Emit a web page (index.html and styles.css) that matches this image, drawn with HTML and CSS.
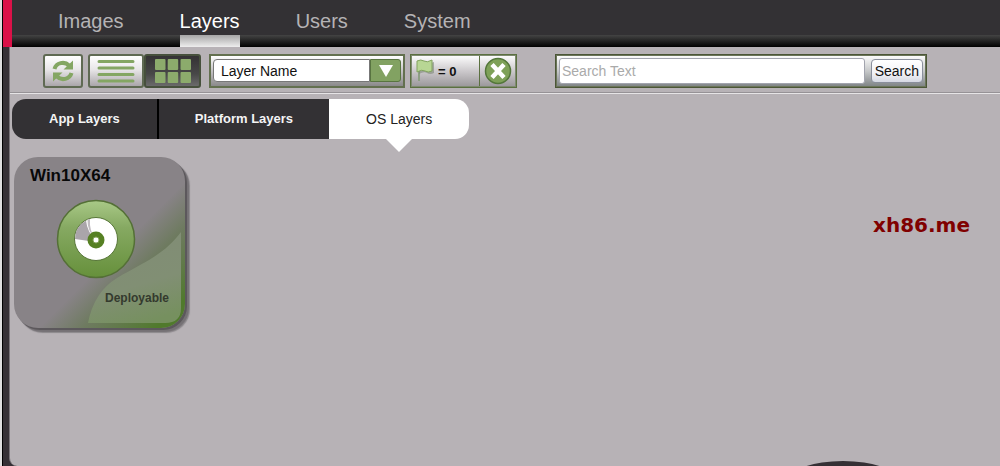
FILE: index.html
```html
<!DOCTYPE html>
<html lang="en">
<head>
    <meta charset="UTF-8">
    <meta name="viewport" content="width=device-width, initial-scale=1.0">
    <title>OS Layers</title>
    <link rel="stylesheet" href="styles.css">
</head>
<body>
    <div class="app">
        <header class="header">
            <nav class="nav">
                <a class="nav-link" href="#images">Images</a>
                <a class="nav-link active" href="#layers">Layers</a>
                <a class="nav-link" href="#users">Users</a>
                <a class="nav-link" href="#system">System</a>
            </nav>
        </header>

        <main class="content">
            <div class="toolbar">
                <button class="tool-button refresh" type="button" aria-label="Refresh">
                    <svg width="24" height="24" viewBox="0 0 24 24" fill="none" stroke="#84a663" stroke-width="4">
                        <path d="M3.500 10 A8.500 8 0 0 1 18 6.500"/>
                        <path d="M20.500 14 A8.500 8 0 0 1 6 17.500"/>
                        <path d="M22 1.500 V10.500 H12.500 Z M2 22.500 V13.500 H11.500 Z" fill="#84a663" stroke="none"/>
                    </svg>
                </button>
                <div class="view-switch">
                    <button class="tool-button view" type="button" aria-label="List view">
                        <svg width="38" height="24" viewBox="0 0 38 24" stroke="#84a663" stroke-width="3" stroke-linecap="round">
                            <path d="M2 2.500H36M2 9H36M2 15.500H36M2 22H36"/>
                        </svg>
                    </button>
                    <button class="tool-button view selected" type="button" aria-label="Grid view">
                        <svg width="36" height="24" viewBox="0 0 36 24" fill="#8cab6c">
                            <rect x="0" y="0" width="10.500" height="11" rx="1"/>
                            <rect x="12.700" y="0" width="10.500" height="11" rx="1"/>
                            <rect x="25.500" y="0" width="10.500" height="11" rx="1"/>
                            <rect x="0" y="13" width="10.500" height="11" rx="1"/>
                            <rect x="12.700" y="13" width="10.500" height="11" rx="1"/>
                            <rect x="25.500" y="13" width="10.500" height="11" rx="1"/>
                        </svg>
                    </button>
                </div>
                <div class="sort">
                    <select class="sort-select" aria-label="Sort by">
                        <option>Layer Name</option>
                    </select>
                    <span class="sort-arrow">
                        <svg width="14" height="12" viewBox="0 0 14 12"><path d="M0 0H14L7 12Z" fill="#fff"/></svg>
                    </span>
                </div>
                <div class="flags">
                    <button class="flag-count" type="button">
                        <svg width="20" height="24" viewBox="0 0 20 24">
                            <path d="M3 3V22" stroke="#8d9f83" stroke-width="2"/>
                            <path d="M3 4Q7 1 10 3T18 3V14Q14 16 11 14T3 15Z" fill="#7d8777" opacity=".6"/>
                            <path d="M1 2Q5 0 8 2T16 1V12Q12 14 9 12T1 13Z" fill="#b8d694" stroke="#82a35f"/>
                        </svg>
                        <span>= 0</span>
                    </button>
                    <button class="flag-clear" type="button" aria-label="Clear flags">
                        <svg width="28" height="28" viewBox="0 0 28 28">
                            <circle cx="14" cy="14" r="12.500" fill="#7ea158" stroke="#53763a" stroke-width="1.500"/>
                            <path d="M8 7.500 20 20.500M20 7.500 8 20.500" stroke="#fff" stroke-width="4.500"/>
                        </svg>
                    </button>
                </div>
                <form class="search">
                    <input class="search-input" type="text" placeholder="Search Text" aria-label="Search Text">
                    <button class="search-button" type="button">Search</button>
                </form>
            </div>

            <nav class="tabs">
                <a class="tab" href="#app-layers">App Layers</a>
                <a class="tab platform" href="#platform-layers">Platform Layers</a>
                <a class="tab current" href="#os-layers">OS Layers</a>
            </nav>

            <div class="layers">
                <article class="layer-card">
                    <svg class="layer-corner" width="171" height="171" viewBox="0 0 171 171">
                        <defs>
                            <linearGradient id="corner" gradientUnits="userSpaceOnUse" x1="98" y1="98" x2="171" y2="171">
                                <stop offset="0" stop-color="#5d7546" stop-opacity="0"/>
                                <stop offset="0.3" stop-color="#5d7546" stop-opacity="0.6"/>
                                <stop offset="0.8" stop-color="#507a2c"/>
                            </linearGradient>
                            <linearGradient id="fold" x1="0.3" y1="0" x2="0.6" y2="1">
                                <stop offset="0" stop-color="#818c76"/>
                                <stop offset="0.6" stop-color="#818f74"/>
                                <stop offset="1" stop-color="#76905f"/>
                            </linearGradient>
                        </defs>
                        <rect width="171" height="171" fill="url(#corner)"/>
                        <path d="M167 75V151Q167 166 151 166H74Q80 135 103 121C130 105 150 98 167 75Z" fill="url(#fold)"/>
                    </svg>
                    <h2 class="layer-name">Win10X64</h2>
                    <svg class="layer-disc" width="80" height="80" viewBox="0 0 80 80">
                        <defs>
                            <linearGradient id="disc" x1="0" y1="0" x2="0" y2="1">
                                <stop offset="0" stop-color="#a9c987"/>
                                <stop offset="0.35" stop-color="#86a962"/>
                                <stop offset="1" stop-color="#66903b"/>
                            </linearGradient>
                        </defs>
                        <circle cx="40" cy="40" r="38.500" fill="url(#disc)" stroke="#547036" stroke-width="1.500"/>
                        <circle cx="40" cy="40" r="21.500" fill="#fff" stroke="#577638"/>
                        <path d="M40 43 19 40A21 21 0 0 1 30 21.500Q31 32 40 43Z" fill="#aaa5aa"/>
                        <path d="M40 41Q31 32 31.500 20.500L34 20Q33 32 40 41Z" fill="#c1bdc1"/>
                        <circle cx="40" cy="41" r="8.500" fill="#568023"/>
                        <circle cx="40" cy="41" r="3" fill="#fff" stroke="#86a45f"/>
                    </svg>
                    <span class="layer-status">Deployable</span>
                </article>
            </div>
            <span class="watermark">xh86.me</span>
            <span class="drawer-handle"></span>
        </main>
    </div>
</body>
</html>
```
FILE: styles.css
```css
* {
    box-sizing: border-box;
}
body {
    margin: 0;
    background: #dedede;
    color: #111;
    font-family: "Liberation Sans", Arial, sans-serif;
    font-size: 14px;
}
button,
input,
select {
    font: inherit;
    color: inherit;
    margin: 0;
}
a {
    text-decoration: none;
}
.app {
    display: flex;
    flex-direction: column;
    min-height: 100vh;
    margin-left: 2px;
    border-left: 1px solid #000;
    background: #353035;
}
.header {
    border-left: 9px solid #db1148;
    background: linear-gradient(#444 0, #000 12px) bottom / 100% 12px no-repeat, #333134;
}
.nav {
    display: flex;
    gap: 56px;
    padding-left: 46px;
}
.nav-link {
    padding: 10px 0 14px;
    font-size: 20px;
    line-height: 23px;
    color: #b5b3b5;
}
.nav-link.active {
    color: #fff;
    background: linear-gradient(#a5a5a5, #eee) bottom / 100% 12px no-repeat;
}
.content {
    position: relative;
    flex: 1;
    margin-left: 6px;
    overflow: hidden;
    border-left: 1px solid #777277;
    border-bottom-left-radius: 8px;
    background: #b7b2b6;
}
.toolbar {
    display: flex;
    align-items: center;
    gap: 5px;
    padding: 7px 73px 4px 33px;
    border-bottom: 1px solid #969296;
    box-shadow: 0 1px #e6e4e6;
}
.tool-button {
    display: flex;
    align-items: center;
    justify-content: center;
    height: 34px;
    padding: 0;
    border: 2px solid #5f6a53;
    border-radius: 3px;
    background: linear-gradient(#fff, #e8e6e8 45%, #aaa6aa);
}
.refresh {
    width: 40px;
}
.view-switch {
    display: flex;
    margin-right: 3px;
}
.view {
    width: 56px;
}
.view.selected {
    width: 57px;
    border-color: #46503c;
    background: linear-gradient(#343234, #484848 60%, #6a6a6a);
}
.sort {
    display: flex;
    width: 196px;
    height: 34px;
    padding: 3px 2px 4px;
    border: 2px solid #63704f;
    background: linear-gradient(#fff, #c5c3c5 50%, #8a898a);
}
.sort-select {
    flex: 1;
    min-width: 0;
    padding: 0 7px;
    border: 1px solid #777;
    border-radius: 4px 0 0 4px;
    background: #fff;
    appearance: none;
}
.sort-arrow {
    display: flex;
    align-items: center;
    justify-content: center;
    width: 31px;
    border: 1px solid #587440;
    border-radius: 0 3px 3px 0;
    background: #82a262;
}
.flags {
    display: flex;
    width: 107px;
    height: 34px;
    border: 1px solid #5b7040;
    outline: 1px solid #7e8a70;
    outline-offset: -2px;
    background: linear-gradient(#fff, #ccc9cc 50%, #999699);
}
.flag-count,
.flag-clear {
    display: flex;
    align-items: center;
    padding: 0;
    border: 0;
    background: none;
}
.flag-count {
    flex: 1;
    gap: 2px;
    padding-left: 5px;
    font-size: 13px;
    font-weight: bold;
}
.flag-clear {
    justify-content: center;
    width: 37px;
    border-left: 1px solid #5b7040;
}
.search {
    display: flex;
    align-items: center;
    flex: 1;
    gap: 6px;
    height: 34px;
    margin-left: 33px;
    padding: 0 3px;
    border: 1px solid #4b5637;
    outline: 1px solid #6b7559;
    outline-offset: -2px;
    background: linear-gradient(#fff, #c6c8c9 50%, #7c8183);
}
.search-input {
    flex: 1;
    min-width: 0;
    height: 26px;
    padding: 0 2px;
    border: 1px solid #a2a4ae;
    border-radius: 3px;
    background: #fff;
}
.search-input::placeholder {
    color: #aaa;
}
.search-button {
    height: 24px;
    padding: 0 3px;
    border: 1px solid #8a8f9c;
    border-radius: 4px;
    background: linear-gradient(#fff, #f2f2f6 60%, #d6d9e3);
}
.tabs {
    display: flex;
    padding: 6px 2px 0;
}
.tab {
    padding: 0 37px;
    line-height: 40px;
    font-size: 13px;
    font-weight: bold;
    color: #f4f4f4;
    background: #333134;
}
.tab:first-child {
    border-radius: 14px 0 0 14px;
}
.tab.platform {
    padding: 0 36px;
    border-left: 2px solid #000;
}
.tab.current {
    position: relative;
    border-radius: 0 14px 14px 0;
    font-size: 14px;
    font-weight: normal;
    color: #222;
    background: #fff;
}
.tab.current::after {
    content: "";
    position: absolute;
    top: 100%;
    left: 50%;
    margin-left: -13px;
    border: 13px solid transparent;
    border-top-color: #fff;
    border-bottom: 0;
}
.layers {
    display: flex;
    flex-wrap: wrap;
    padding: 18px 4px;
}
.layer-card {
    position: relative;
    display: flex;
    flex-direction: column;
    width: 171px;
    height: 171px;
    padding: 9px 16px;
    border-radius: 24px;
    background: #888387;
    box-shadow: 2px 2px #5c585c, 4px 4px 1px #757175, 5px 5px 1px #8f8b8f;
}
.layer-corner {
    position: absolute;
    top: 0;
    left: 0;
    border-radius: 24px;
}
.layer-name {
    position: relative;
    margin: 0;
    font-size: 17px;
    line-height: 20px;
    color: #080808;
}
.layer-disc {
    position: relative;
    margin: 13px 0 11px 26px;
}
.layer-status {
    position: relative;
    align-self: flex-end;
    font-size: 12px;
    line-height: 16px;
    font-weight: bold;
    color: #343a2e;
}
.watermark {
    position: absolute;
    top: 166px;
    right: 30px;
    font-family: "DejaVu Sans", sans-serif;
    font-size: 20px;
    font-weight: bold;
    line-height: 24px;
    color: #800000;
}
.drawer-handle {
    position: absolute;
    right: 102px;
    bottom: -35px;
    width: 110px;
    height: 40px;
    border-radius: 50%;
    background: #353035;
}
```
